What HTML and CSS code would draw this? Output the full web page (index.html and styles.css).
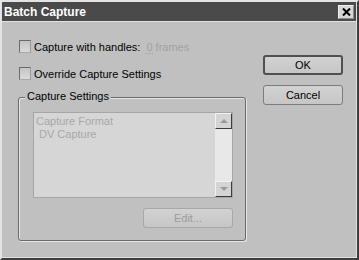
FILE: index.html
```html
<!DOCTYPE html>
<html lang="en">
<head>
    <meta charset="UTF-8">
    <title>Batch Capture</title>
    <link rel="stylesheet" href="styles.css">
</head>
<body>
    <div class="window">
        <div class="titlebar">
            <span class="title">Batch Capture</span>
            <button class="close">
                <svg width="9" height="8" viewBox="0 0 9 8"><path d="M1 0.5 L8 7.5 M8 0.5 L1 7.5" stroke="#000" stroke-width="2"/></svg>
            </button>
        </div>
        <div class="content">
            <div class="main">
                <label class="check">
                    <span class="box"></span>
                    <span>Capture with handles:</span>
                    <span class="muted"><span class="num">0</span> frames</span>
                </label>
                <label class="check second">
                    <span class="box"></span>
                    <span>Override Capture Settings</span>
                </label>
                <div class="group">
                    <span class="legend">Capture Settings</span>
                    <div class="list">
                        <div class="items">
                            <div class="item">Capture Format</div>
                            <div class="item sub">DV Capture</div>
                        </div>
                        <div class="scroll">
                            <div class="arrow"><span class="tri up"></span></div>
                            <div class="track"></div>
                            <div class="arrow"><span class="tri down"></span></div>
                        </div>
                    </div>
                    <div class="group-foot">
                        <button class="btn disabled">Edit...</button>
                    </div>
                </div>
            </div>
            <div class="side">
                <button class="btn default">OK</button>
                <button class="btn">Cancel</button>
            </div>
        </div>
    </div>
</body>
</html>
```

FILE: styles.css
```css
body {
    margin: 0;
    font-family: "Liberation Sans", Arial, sans-serif;
    font-size: 11px;
    color: #000;
}
.window {
    width: 359px;
    height: 260px;
    box-sizing: border-box;
    background: #c0c0c0;
    border-style: solid;
    border-width: 2px;
    border-color: #e4e4e4 #3e3e3e #3e3e3e #e4e4e4;
    box-shadow: inset -1px -1px 0 #e0e0e0;
    display: flex;
    flex-direction: column;
}
.titlebar {
    height: 19px;
    background: #4a4a4a;
    border-bottom: 1px solid #e2e2e2;
    margin-right: 1px;
    display: flex;
    align-items: center;
    justify-content: space-between;
}
.title {
    color: #fff;
    font-weight: bold;
    font-size: 12px;
    padding-left: 2px;
    padding-top: 1px;
}
.close {
    width: 16px;
    height: 14px;
    padding: 0;
    margin-right: 2px;
    background: #d6d6d6;
    border: 1px solid;
    border-color: #f0f0f0 #8a8a8a #8a8a8a #f0f0f0;
    display: flex;
    align-items: center;
    justify-content: center;
}
.content {
    flex: 1;
    display: flex;
    padding: 18px 14px 0 16px;
}
.main {
    width: 230px;
}
.check {
    display: flex;
    align-items: center;
    gap: 3px;
    height: 13px;
    margin-left: 1px;
}
.check.second {
    margin-top: 14px;
}
.box {
    width: 10px;
    height: 11px;
    border: 1px solid;
    border-color: #6a6a6a #9a9a9a #a8a8a8 #6a6a6a;
    background: linear-gradient(#c4c4c4, #dadada);
}
.muted {
    color: #a2a2a2;
    margin-left: 3px;
}
.num {
    border-bottom: 1px dotted #a2a2a2;
}
.group {
    position: relative;
    margin-top: 17px;
    width: 226px;
    height: 142px;
    border: 1px solid #6a6a6a;
    border-radius: 3px;
    box-shadow: 1px 1px 0 #e6e6e6, inset 1px 1px 0 #e6e6e6;
    padding: 14px 12px 0 14px;
    box-sizing: border-box;
    width: 228px;
    height: 144px;
}
.legend {
    position: absolute;
    top: -8px;
    left: 6px;
    padding: 0 2px;
    line-height: 13px;
    background: #c0c0c0;
}
.list {
    height: 86px;
    box-sizing: border-box;
    border: 1px solid #a6a6a6;
    background: #d6d6d6;
    display: flex;
}
.items {
    flex: 1;
    padding: 2px 0 0 2px;
    color: #a8a8a8;
    line-height: 13px;
}
.item.sub {
    padding-left: 3px;
}
.scroll {
    width: 17px;
    display: flex;
    flex-direction: column;
    background: #e8e8e8;
}
.arrow {
    height: 16px;
    box-sizing: border-box;
    background: #d4d4d4;
    border: 1px solid;
    border-color: #f2f2f2 #3c3c3c #3c3c3c #f2f2f2;
    display: flex;
    align-items: center;
    justify-content: center;
}
.track {
    flex: 1;
}
.tri {
    width: 0;
    height: 0;
    border-left: 4px solid transparent;
    border-right: 4px solid transparent;
}
.tri.up {
    border-bottom: 4px solid #9a9a9a;
}
.tri.down {
    border-top: 4px solid #9a9a9a;
}
.group-foot {
    display: flex;
    justify-content: flex-end;
    margin-top: 10px;
}
.side {
    margin-left: auto;
    padding-top: 15px;
    display: flex;
    flex-direction: column;
    gap: 10px;
}
.btn {
    width: 80px;
    height: 20px;
    box-sizing: border-box;
    font-family: "Liberation Sans", Arial, sans-serif;
    font-size: 11px;
    color: #000;
    padding: 0;
    border: 1px solid #7c7c7c;
    border-radius: 3px;
    background: linear-gradient(#d2d2d2, #c6c6c6);
}
.btn.default {
    border: 2px solid #505050;
}
.btn.disabled {
    width: 90px;
    color: #9c9c9c;
    border-color: #a8a8a8;
}
```
